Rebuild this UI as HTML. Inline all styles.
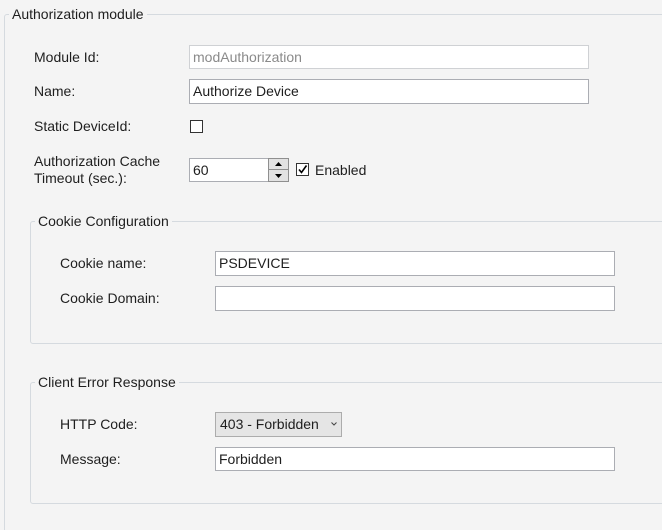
<!DOCTYPE html>
<html style="overflow:hidden"><head><style>
html,body{margin:0;width:662px;height:530px;overflow:hidden}
body{background:#f4f4f4;font-family:"Liberation Sans",sans-serif;font-size:14px;color:#1e1e1e;position:relative}
.a{position:absolute}
.g{position:absolute;border:1px solid #d5dadf;border-radius:3px}
.lg{position:absolute;background:#f4f4f4;padding:0 3px;line-height:16px}
.in{position:absolute;background:#fff;border:1px solid #abadb3;box-sizing:border-box;padding-left:3px;line-height:22px}
.lb{position:absolute;line-height:17px}
.cb{position:absolute;width:13px;height:13px;border:1px solid #333;box-sizing:border-box;background:#fff}
</style></head><body>
<div class="g" style="left:4px;top:14px;width:700px;height:540px"></div>
<div class="lg" style="left:9px;top:6px">Authorization module</div>

<div class="lb" style="left:34px;top:49px">Module Id:</div>
<div class="in" style="left:189px;top:45px;width:400px;height:24px;color:#8a8a8a;border-color:#cfd1d4">modAuthorization</div>
<div class="lb" style="left:34px;top:83px">Name:</div>
<div class="in" style="left:189px;top:79px;width:400px;height:25px">Authorize Device</div>
<div class="lb" style="left:34px;top:118px">Static DeviceId:</div>
<div class="cb" style="left:190px;top:120px"></div>
<div class="lb" style="left:34px;top:153px">Authorization Cache<br>Timeout (sec.):</div>
<div class="in" style="left:189px;top:158px;width:80px;height:24px">60</div>
<div class="a" style="left:268px;top:158px;width:21px;height:24px;border:1px solid #8f8f8f;box-sizing:border-box;background:#e2e2e2">
<div style="position:absolute;left:0;top:10px;width:19px;height:1px;background:#8f8f8f"></div>
<svg class="a" style="left:6px;top:3px" width="7" height="4"><path d="M0 4L3.5 0L7 4Z" fill="#000"/></svg>
<svg class="a" style="left:6px;top:15px" width="7" height="4"><path d="M0 0L3.5 4L7 0Z" fill="#000"/></svg>
</div>
<div class="cb" style="left:296px;top:163px"><svg width="11" height="11" style="position:absolute;left:0;top:0"><path d="M2 5.5L4.5 8.5L9.5 1.5" stroke="#000" stroke-width="1.6" fill="none"/></svg></div>
<div class="lb" style="left:315px;top:162px">Enabled</div>

<div class="g" style="left:30px;top:221px;width:700px;height:121px"></div>
<div class="lg" style="left:35px;top:213px">Cookie Configuration</div>
<div class="lb" style="left:60px;top:255px">Cookie name:</div>
<div class="in" style="left:215px;top:251px;width:400px;height:25px">PSDEVICE</div>
<div class="lb" style="left:60px;top:290px">Cookie Domain:</div>
<div class="in" style="left:215px;top:286px;width:400px;height:25px"></div>

<div class="g" style="left:30px;top:382px;width:700px;height:120px"></div>
<div class="lg" style="left:35px;top:374px">Client Error Response</div>
<div class="lb" style="left:60px;top:416px">HTTP Code:</div>
<div class="a" style="left:215px;top:412px;width:127px;height:25px;border:1px solid #acacac;box-sizing:border-box;background:#e5e5e5;line-height:23px;padding-left:4px">403 - Forbidden<svg class="a" style="left:115px;top:9px" width="6" height="4"><path d="M0.5 0.5L3 3L5.5 0.5" stroke="#444" fill="none"/></svg></div>
<div class="lb" style="left:60px;top:451px">Message:</div>
<div class="in" style="left:215px;top:447px;width:400px;height:24px">Forbidden</div>
</body></html>
